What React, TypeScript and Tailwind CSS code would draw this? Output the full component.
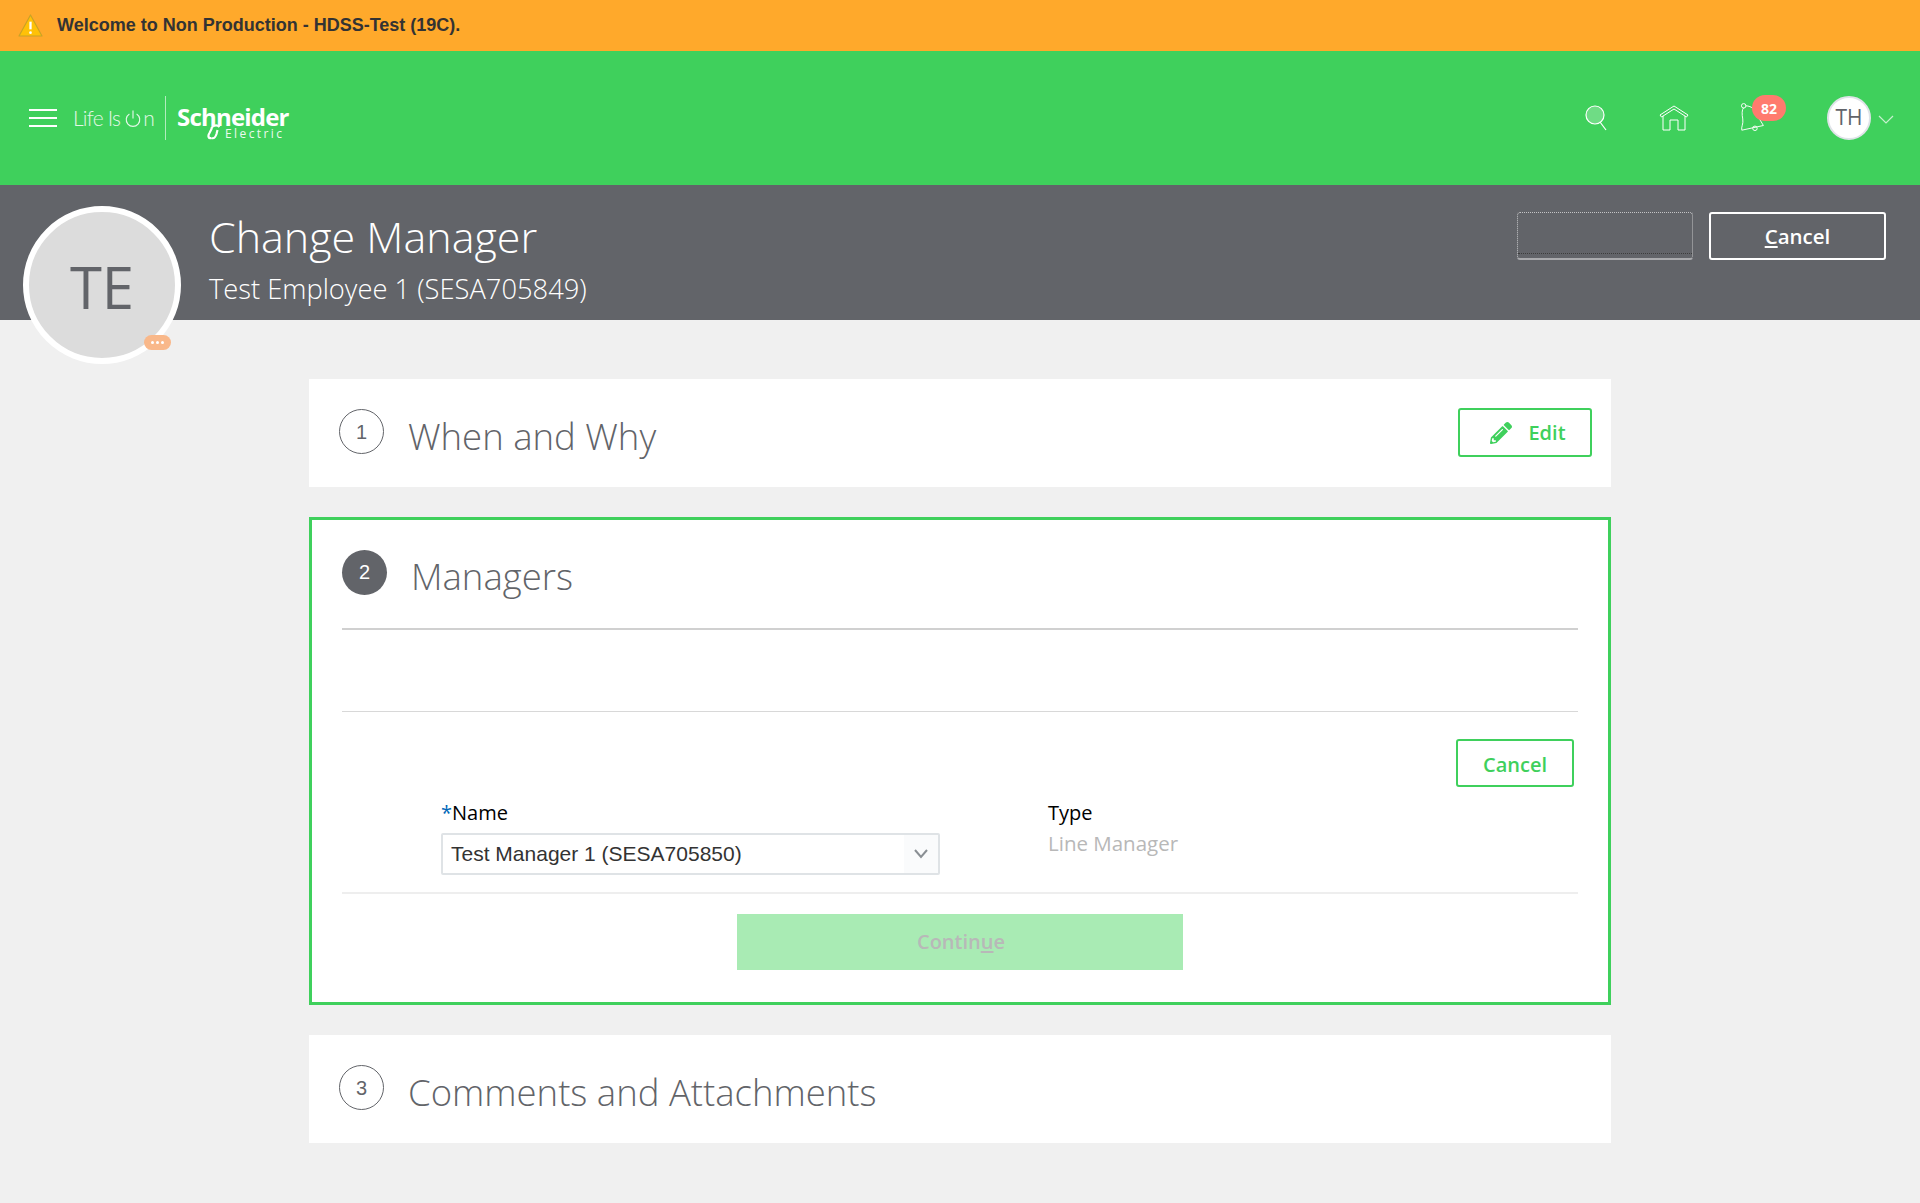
import { FaPencilAlt } from 'react-icons/fa';

const lightFont = "font-['Open_Sans',sans-serif]";

function StepCircle({ step, active }: { step: number; active?: boolean }) {
    return (
        <div
            className={
                active
                    ? "flex h-[45px] w-[45px] shrink-0 items-center justify-center rounded-full bg-[#626469] font-['Liberation_Sans',sans-serif] text-[20px] text-white"
                    : "flex h-[45px] w-[45px] shrink-0 items-center justify-center rounded-full border border-[#626469] font-['Liberation_Sans',sans-serif] text-[20px] text-[#626469]"
            }
        >
            {step}
        </div>
    );
}

function CollapsedStep({ step, title, children }: { step: number; title: string; children?: React.ReactNode }) {
    return (
        <section className="flex h-[108px] items-center bg-white pr-[19px] pl-[30px]">
            <div className="-mt-[3px]">
                <StepCircle step={step} />
            </div>
            <h2 className={`${lightFont} mt-[6px] ml-[24px] flex-1 text-[36.5px] font-light text-[#626469]`}>
                {title}
            </h2>
            {children}
        </section>
    );
}

function Logo() {
    return (
        <div className="ml-[16px] flex items-center text-white">
            <div className="flex w-[82px] items-center font-['Lato',sans-serif] text-[21px] font-light tracking-[-0.8px] opacity-85">
                <span>Life Is</span>
                <svg viewBox="0 0 20 20" className="mr-[1px] ml-[4px] h-[21px] w-[18px]" fill="none" stroke="currentColor" strokeWidth="1.3">
                    <path d="M6 5 A7.5 7.5 0 1 0 14 5" />
                    <path d="M10 1v9" />
                </svg>
                <span>n</span>
            </div>
            <div className="mx-[10px] h-[44px] w-px bg-white/60" />
            <div className="relative h-[44px] w-[112px]">
                <div className="absolute top-[10px] left-[1px] font-['Open_Sans',sans-serif] text-[24px] leading-[22px] font-bold tracking-[-0.8px]">
                    Schneider
                </div>
                <div className="absolute top-[32px] left-[49px] font-['Open_Sans',sans-serif] text-[12px] leading-[12px] tracking-[2.4px] opacity-90">
                    Electric
                </div>
                <svg viewBox="0 0 16 16" className="absolute top-[28px] left-[29px] h-[16px] w-[17px]" fill="none" stroke="currentColor" strokeWidth="2.2">
                    <path d="M14 3 C11 0 6 2 6 5 L4 9 C2 12 3 15 6 14" />
                    <path d="M6 14 C9 15 10 13 11 10 L12 6" />
                </svg>
            </div>
        </div>
    );
}

function TopBarIcons() {
    return (
        <div className="flex items-center text-white">
            <svg viewBox="0 0 26 30" className="mr-[48px] ml-[2px] h-[30px] w-[26px]" fill="none" stroke="currentColor" strokeWidth="1.2">
                <circle cx="11" cy="12" r="9" fill="#ffffff" fillOpacity="0.25" />
                <path d="M16 19l6 8" />
            </svg>
            <svg viewBox="0 0 32 28" className="mr-[51px] h-[28px] w-[32px]" fill="none" stroke="currentColor" strokeWidth="1">
                <path d="M2 11 L16 2 L30 11 L28.5 13 L16 5 L3.5 13 Z" />
                <path d="M5 12 V26 H12 V16 H20 V26 H27 V12" />
            </svg>
            <div className="relative mr-[42px] h-[30px] w-[44px]">
                <svg viewBox="0 0 32 32" className="absolute top-0 -left-[2px] h-[30px] w-[30px]" fill="none" stroke="currentColor" strokeWidth="1">
                    <circle cx="5" cy="3" r="2.4" />
                    <circle cx="17" cy="27" r="2.4" />
                    <path d="M7 3 C14 3 18 8 20 14 L26 24 L3 29 C2 26 5 22 4 17 C3 12 3 7 5 5" />
                </svg>
                <div className="absolute -top-[8px] left-[11px] flex h-[26px] w-[34px] items-center justify-center rounded-full bg-[#ff7b6e] font-['Open_Sans',sans-serif] text-[14px] font-bold text-white">
                    82
                </div>
            </div>
            <div className="flex h-[44px] w-[44px] items-center justify-center rounded-full border-2 border-[#dfe3e8] bg-white font-['Open_Sans',sans-serif] text-[21px] text-[#626469]">
                TH
            </div>
            <svg viewBox="0 0 16 10" className="mt-[4px] ml-[7px] h-[10px] w-[16px]" fill="none" stroke="#ffffff" strokeOpacity="0.7" strokeWidth="1.2">
                <path d="M1 1l7 7 7-7" />
            </svg>
        </div>
    );
}

export default function App() {
    return (
        <div className="relative min-h-[1203px] bg-[#f0f0f0] font-['Open_Sans',sans-serif]">
            <div className="flex h-[51px] items-center bg-[#ffa92b] pl-[18px]">
                <svg viewBox="0 0 26 24" className="h-[23px] w-[25px]">
                    <path d="M13 1 L25 23 H1 Z" fill="#ffc107" stroke="#c9a227" strokeWidth="1.2" strokeLinejoin="round" />
                    <path d="M13 8v8" stroke="#ffffff" strokeWidth="2.4" />
                    <circle cx="13" cy="19.5" r="1.4" fill="#ffffff" />
                </svg>
                <span className="ml-[14px] font-['Liberation_Sans',sans-serif] text-[18px] font-bold text-[#333333]">
                    Welcome to Non Production - HDSS-Test (19C).
                </span>
            </div>

            <header className="flex h-[134px] items-center justify-between bg-[#3fd05c] pr-[26px] pl-[29px]">
                <div className="flex items-center">
                    <div className="flex w-[28px] flex-col gap-[6px]">
                        <div className="h-[2px] bg-white" />
                        <div className="h-[2px] bg-white" />
                        <div className="h-[2px] bg-white" />
                    </div>
                    <Logo />
                </div>
                <TopBarIcons />
            </header>

            <div className="flex h-[135px] justify-between bg-[#626469] pt-[27px] pr-[34px] pl-[209px]">
                <div className={`${lightFont} font-light text-white`}>
                    <h1 className="text-[43px] leading-[50px]">Change Manager</h1>
                    <p className="mt-[9px] text-[27.3px] leading-[36px]">Test Employee 1 (SESA705849)</p>
                </div>
                <div className="flex h-[48px] gap-[16px]">
                    <button className="h-[48px] w-[176px] rounded-[3px] border-x border-t border-b-2 border-dotted border-[#c4c4c6] [border-bottom-style:solid] border-b-[#a9aaad]">
                        <div className="mt-[36px] border-t border-dotted border-[#3c3c3c]" />
                    </button>
                    <button className="h-[48px] w-[177px] rounded-[3px] border-2 border-white text-[20.5px] font-semibold text-white">
                        <span className="underline underline-offset-2">C</span>ancel
                    </button>
                </div>
            </div>

            <div className="absolute top-[206px] left-[23px] flex h-[158px] w-[158px] items-center justify-center rounded-full border-[6px] border-white bg-[#dcdcdc] pt-[3px] text-[58px] text-[#626469]">
                TE
                <div className="absolute right-[4px] bottom-[8px] flex h-[15px] w-[27px] items-center justify-center gap-[2px] rounded-full bg-[#f9b88a]">
                    <span className="h-[3px] w-[3px] rounded-full bg-white" />
                    <span className="h-[3px] w-[3px] rounded-full bg-white" />
                    <span className="h-[3px] w-[3px] rounded-full bg-white" />
                </div>
            </div>

            <main className="mx-auto w-[1302px] pt-[59px]">
                <CollapsedStep step={1} title="When and Why">
                    <button className="-mt-[1px] flex h-[49px] w-[134px] items-center justify-center gap-[16px] rounded-[3px] border-2 border-[#3fd05c] pl-[6px] text-[20px] font-semibold text-[#3fd05c]">
                        <FaPencilAlt className="h-[22px] w-[22px]" />
                        Edit
                    </button>
                </CollapsedStep>

                <section className="mt-[30px] h-[488px] border-[3px] border-[#3fd05c] bg-white px-[30px]">
                    <div className="flex h-[110px] items-center border-b-2 border-[#d0d0d0] pb-[4px]">
                        <StepCircle step={2} active />
                        <h2 className={`${lightFont} mt-[9px] ml-[24px] text-[36.5px] font-light text-[#626469]`}>Managers</h2>
                    </div>
                    <div className="h-[82px] border-b border-[#d8d8d8]" />
                    <div className="flex justify-end pt-[27px] pr-[4px]">
                        <button className="h-[48px] w-[118px] rounded-[3px] border-2 border-[#3fd05c] pt-[3px] text-[20px] font-semibold text-[#3fd05c]">
                            Cancel
                        </button>
                    </div>
                    <div className="mt-[11px] flex h-[96px] border-b-2 border-[#eeeeee] pl-[99px]">
                        <div className="w-[607px]">
                            <div className="text-[20px] leading-[30px] text-black">
                                <span className="text-[#0067b8]">*</span>Name
                            </div>
                            <div className="mt-[5px] flex h-[42px] w-[499px] items-center justify-between rounded-[2px] border-2 border-[#dfe3e6] bg-white font-['Liberation_Sans',sans-serif] text-[21px] text-[#333333]">
                                <span className="pl-[8px]">Test Manager 1 (SESA705850)</span>
                                <div className="flex h-full w-[34px] items-center justify-center bg-[#fafbfc]">
                                    <svg viewBox="0 0 14 10" className="h-[10px] w-[14px]" fill="none" stroke="#8a8f94" strokeWidth="2">
                                        <path d="M1 1l6 7 6-7" />
                                    </svg>
                                </div>
                            </div>
                        </div>
                        <div>
                            <div className="text-[20px] leading-[30px] text-black">Type</div>
                            <div className="text-[20.5px] leading-[30px] text-[#b8b8b8]">Line Manager</div>
                        </div>
                    </div>
                    <div className="flex justify-center pt-[20px]">
                        <button className="h-[56px] w-[446px] bg-[#a9ebb4] pl-[2px] text-[20px] font-semibold text-[#b8b8b8]">
                            Contin<span className="underline underline-offset-2">u</span>e
                        </button>
                    </div>
                </section>

                <div className="mt-[30px]">
                    <CollapsedStep step={3} title="Comments and Attachments" />
                </div>
            </main>
        </div>
    );
}
